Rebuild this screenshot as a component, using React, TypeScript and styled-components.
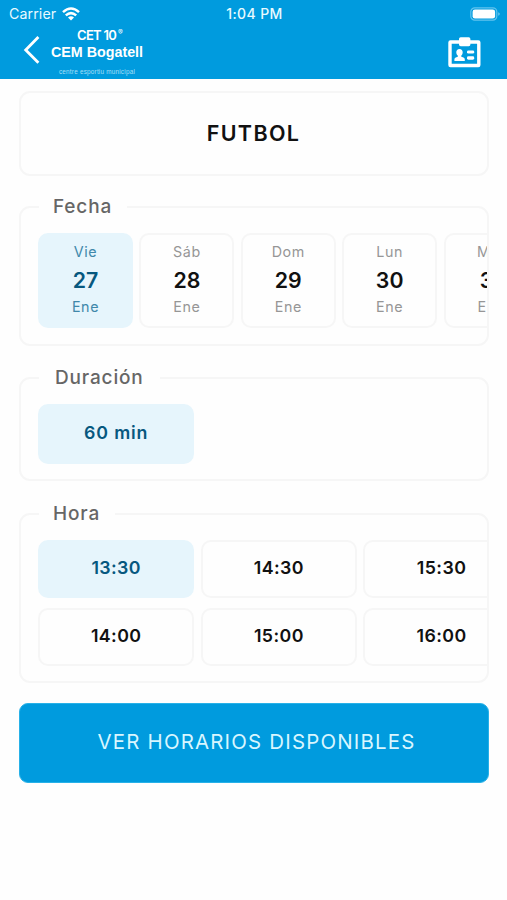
import React from "react";
import styled, { createGlobalStyle, css } from "styled-components";

const blue = "#009bde";
const line = "#f6f6f6";

const GlobalStyle = createGlobalStyle`
  *, *::before, *::after { box-sizing: border-box; }
  body { margin: 0; background: #fefefe; font-family: Inter, "Liberation Sans", sans-serif; }
  button { font-family: inherit; margin: 0; padding: 0; cursor: pointer; }
`;

const Screen = styled.div`
  width: 507px;
  height: 900px;
  overflow: hidden;
  background: #fefefe;
`;

const Header = styled.header`
  height: 79px;
  background: ${blue};
  color: #fff;
`;

const StatusBar = styled.div`
  height: 27px;
  padding: 0 7px 0 9px;
  display: grid;
  grid-template-columns: 1fr auto 1fr;
  align-items: center;
  color: #e9faff;
  font-size: 14.2px;
  line-height: 27px;
`;

const Carrier = styled.div`
  display: flex;
  align-items: center;
  gap: 6px;
  letter-spacing: 0.1px;
`;

const Clock = styled.div`
  font-size: 14px;
  font-weight: 500;
  letter-spacing: 0.4px;
`;

const BatterySlot = styled.div`
  display: flex;
  justify-content: flex-end;
`;

const NavBar = styled.nav`
  height: 52px;
  padding: 0 26px 0 22px;
  display: flex;
  align-items: flex-start;
`;

const IconButton = styled.button`
  display: block;
  border: 0;
  background: none;
  color: #fff;
  line-height: 0;
`;

const BackButton = styled(IconButton)`
  margin-top: 8px;
`;

const CardButton = styled(IconButton)`
  margin: 10px 0 0 auto;
`;

const Brand = styled.div`
  margin-left: 10px;
  width: 92px;
  display: flex;
  flex-direction: column;
  align-items: center;
  white-space: nowrap;
  font-family: "Liberation Sans", sans-serif;
`;

const BrandMark = styled.div`
  display: flex;
  align-items: flex-start;
  height: 16px;
  padding-left: 5px;
  font: 600 13px/16px Inter, sans-serif;
  letter-spacing: -0.75px;
`;

const Registered = styled.span`
  margin-left: 2px;
  font-size: 7px;
  line-height: 11px;
  font-weight: 400;
`;

const BrandName = styled.div`
  height: 17px;
  font-size: 14.3px;
  line-height: 18px;
  font-weight: 700;
`;

const BrandTag = styled.div`
  margin-top: 7px;
  font-size: 6.4px;
  line-height: 10px;
  letter-spacing: 0.2px;
  color: #a5dff7;
`;

const Content = styled.main`
  padding: 12px 18px 0 19px;
`;

const box = css`
  border: 2px solid ${line};
  border-radius: 11px;
`;

const Title = styled.h1`
  ${box}
  margin: 0 0 30px;
  height: 85px;
  display: flex;
  align-items: center;
  justify-content: center;
  padding: 0 1px 2px 0;
  color: #111;
  font-size: 21.5px;
  font-weight: 600;
  letter-spacing: 1.35px;
`;

const Panel = styled.section<{ $height: number; $after: number }>`
  ${box}
  height: ${(p) => p.$height}px;
  margin-bottom: ${(p) => p.$after}px;
  padding-left: 17px;
`;

const Legend = styled.h2<{ $width: number; $indent?: number }>`
  width: ${(p) => p.$width}px;
  height: 26px;
  margin: -15px 0 14px 1px;
  padding-left: ${(p) => p.$indent ?? 14}px;
  background: #fefefe;
  color: #666;
  font-size: 19px;
  line-height: 27px;
  font-weight: 500;
  letter-spacing: 0.85px;
  white-space: nowrap;
`;

const Days = styled.div`
  display: flex;
  gap: 6.4px;
  overflow: hidden;
`;

const tile = css<{ $active?: boolean }>`
  border: 2px solid ${(p) => (p.$active ? "#e6f5fc" : line)};
  border-radius: 10px;
  background: ${(p) => (p.$active ? "#e6f5fc" : "#fefefe")};
  color: ${(p) => (p.$active ? "#07587f" : "#111")};
`;

const Day = styled.button<{ $active?: boolean }>`
  ${tile}
  flex: 0 0 95px;
  height: 95px;
  display: grid;
  grid-template-rows: 32px 26px 27px;
  align-content: start;
  align-items: center;
  justify-items: center;
`;

const DayLabel = styled.span<{ $active?: boolean }>`
  color: ${(p) => (p.$active ? "#4088aa" : "#969696")};
  font-size: 14.3px;
  letter-spacing: 0.6px;
`;

const DayNumber = styled.span`
  font-size: 21.3px;
  font-weight: 600;
`;

const Slots = styled.div<{ $row: number }>`
  display: grid;
  grid-auto-flow: column;
  grid-template-rows: repeat(auto-fill, ${(p) => p.$row}px);
  grid-auto-columns: 156.4px;
  gap: 10px 6.3px;
  height: ${(p) => (p.$row === 58 ? 126 : p.$row)}px;
  overflow: hidden;
`;

const Slot = styled.button<{ $active?: boolean; $spacing?: number }>`
  ${tile}
  padding-bottom: 3px;
  font-size: 17.8px;
  font-weight: 600;
  letter-spacing: ${(p) => p.$spacing ?? 0.4}px;
`;

const Submit = styled.button`
  display: block;
  width: 100%;
  height: 80px;
  padding: 0 0 3px 5px;
  border: 1px solid #27b1e8;
  border-radius: 9px;
  background: ${blue};
  color: #d8f6ff;
  font-size: 20.4px;
  font-weight: 400;
  letter-spacing: 1.2px;
`;

const WifiIcon = () => (
  <svg width="18" height="14" viewBox="0 0 18 14" fill="none" stroke="#fff" strokeWidth="2.5">
    <path d="M1 5.1Q9-2.2 17 5.1" />
    <path d="M3.8 8.4Q9 3.8 14.2 8.4" />
    <path d="M9 13.6 6 10.5Q9 7.8 12 10.5Z" fill="#fff" stroke="none" />
  </svg>
);

const BatteryIcon = () => (
  <svg width="30" height="14" viewBox="0 0 30 14">
    <rect x="0.8" y="0.8" width="26" height="12.4" rx="4" fill="none" stroke="#62c4ee" strokeWidth="1.2" />
    <rect x="2.6" y="2.4" width="22.5" height="9.2" rx="2.4" fill="#fff" />
    <path d="M28.3 5.2v3.6q1.4-.5 1.4-1.8t-1.4-1.8z" fill="#7ccef0" />
  </svg>
);

const BackIcon = () => (
  <svg width="19" height="30" viewBox="0 0 19 30" fill="none" stroke="#fff" strokeWidth="2.8">
    <path d="M16.4 2 3.7 15l12.7 12.8" />
  </svg>
);

const IdCardIcon = () => (
  <svg width="33" height="31" viewBox="0 0 33 31" fill="#fff">
    <path
      fillRule="evenodd"
      d="M2.5 3.2H11V2Q11 .3 12.7.3h8Q22.4.3 22.4 2v1.2h7.9q2.2 0 2.2 2.2v22.7q0 2.2-2.2 2.2H2.5Q.3 30.3.3 28.1V5.4q0-2.2 2.2-2.2ZM3.7 6.7v20h25.4v-20h-6.7v.8q0 1.7-1.7 1.7h-8Q11 9.2 11 7.5v-.8Z"
    />
    <path d="M11.5 12c2 0 3.2 1.4 3.2 3.3 0 1.6-.6 2.7-1.4 3.3v1.1l2.2.8q1.3.5 1.3 2v1.6H6.4v-1.6q0-1.5 1.3-2l2.1-.8v-1.1c-.9-.6-1.5-1.7-1.5-3.3 0-1.9 1.2-3.3 3.2-3.3Z" />
    <rect x="19" y="13.4" width="7.2" height="3.2" rx="1.4" />
    <rect x="19" y="19.3" width="7.2" height="3.4" rx="1.4" />
  </svg>
);

const days = [
  ["Vie", "27"],
  ["Sáb", "28"],
  ["Dom", "29"],
  ["Lun", "30"],
  ["Mar", "31"],
];
const hours = ["13:30", "14:00", "14:30", "15:00", "15:30", "16:00"];

export default function App() {
  return (
    <Screen>
      <GlobalStyle />
      <Header>
        <StatusBar>
          <Carrier>
            Carrier <WifiIcon />
          </Carrier>
          <Clock>1:04 PM</Clock>
          <BatterySlot>
            <BatteryIcon />
          </BatterySlot>
        </StatusBar>
        <NavBar>
          <BackButton aria-label="Volver">
            <BackIcon />
          </BackButton>
          <Brand>
            <BrandMark>
              CET 10<Registered>®</Registered>
            </BrandMark>
            <BrandName>CEM Bogatell</BrandName>
            <BrandTag>centre esportiu municipal</BrandTag>
          </Brand>
          <CardButton aria-label="Carnet">
            <IdCardIcon />
          </CardButton>
        </NavBar>
      </Header>
      <Content>
        <Title>FUTBOL</Title>
        <Panel $height={140} $after={31}>
          <Legend $width={88}>Fecha</Legend>
          <Days>
            {days.map(([name, number], i) => (
              <Day key={number} $active={i === 0}>
                <DayLabel $active={i === 0}>{name}</DayLabel>
                <DayNumber>{number}</DayNumber>
                <DayLabel $active={i === 0}>Ene</DayLabel>
              </Day>
            ))}
          </Days>
        </Panel>
        <Panel $height={104} $after={32}>
          <Legend $width={121} $indent={16}>Duración</Legend>
          <Slots $row={60}>
            <Slot $active $spacing={0.85}>60 min</Slot>
          </Slots>
        </Panel>
        <Panel $height={170} $after={20}>
          <Legend $width={76}>Hora</Legend>
          <Slots $row={58}>
            {hours.map((hour, i) => (
              <Slot key={hour} $active={i === 0}>
                {hour}
              </Slot>
            ))}
          </Slots>
        </Panel>
        <Submit>VER HORARIOS DISPONIBLES</Submit>
      </Content>
    </Screen>
  );
}
